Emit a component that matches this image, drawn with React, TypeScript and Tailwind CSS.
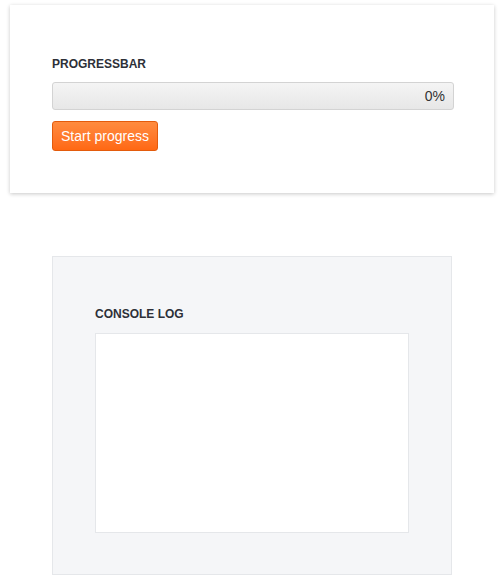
export default function App() {
  return (
    <div className="min-h-[586px] bg-white font-['Liberation_Sans',Arial,sans-serif]">
      <div className="ml-[10px] mt-[5px] w-[484px] bg-white pt-[52px] pb-[42px] pl-[42px] pr-[40px] shadow-[0_1px_4px_rgba(0,0,0,0.22)]">
        <h3 className="text-[12px] leading-[14px] font-bold text-[#2d3038] mb-[11px]">PROGRESSBAR</h3>
        <div className="h-[28px] w-[402px] rounded-[3px] border border-[#d3d3d3] bg-gradient-to-b from-[#f4f4f4] to-[#e7e7e7] flex items-center justify-end pr-[8px]">
          <span className="text-[14px] text-[#333]">0%</span>
        </div>
        <button className="mt-[11px] h-[30px] w-[106px] rounded-[3px] border border-[#e35b0c] bg-gradient-to-b from-[#ff8b3e] to-[#ff6812] text-[14px] text-white">
          Start progress
        </button>
      </div>

      <div className="ml-[52px] mt-[63px] w-[400px] border border-[#e5e7ea] bg-[#f5f6f8] pt-[50px] pb-[41px] pl-[42px] pr-[42px]">
        <h3 className="text-[12px] leading-[14px] font-bold text-[#2d3038] mb-[12px]">CONSOLE LOG</h3>
        <div className="h-[200px] w-[314px] border border-[#e5e7ea] bg-white"></div>
      </div>
    </div>
  );
}
